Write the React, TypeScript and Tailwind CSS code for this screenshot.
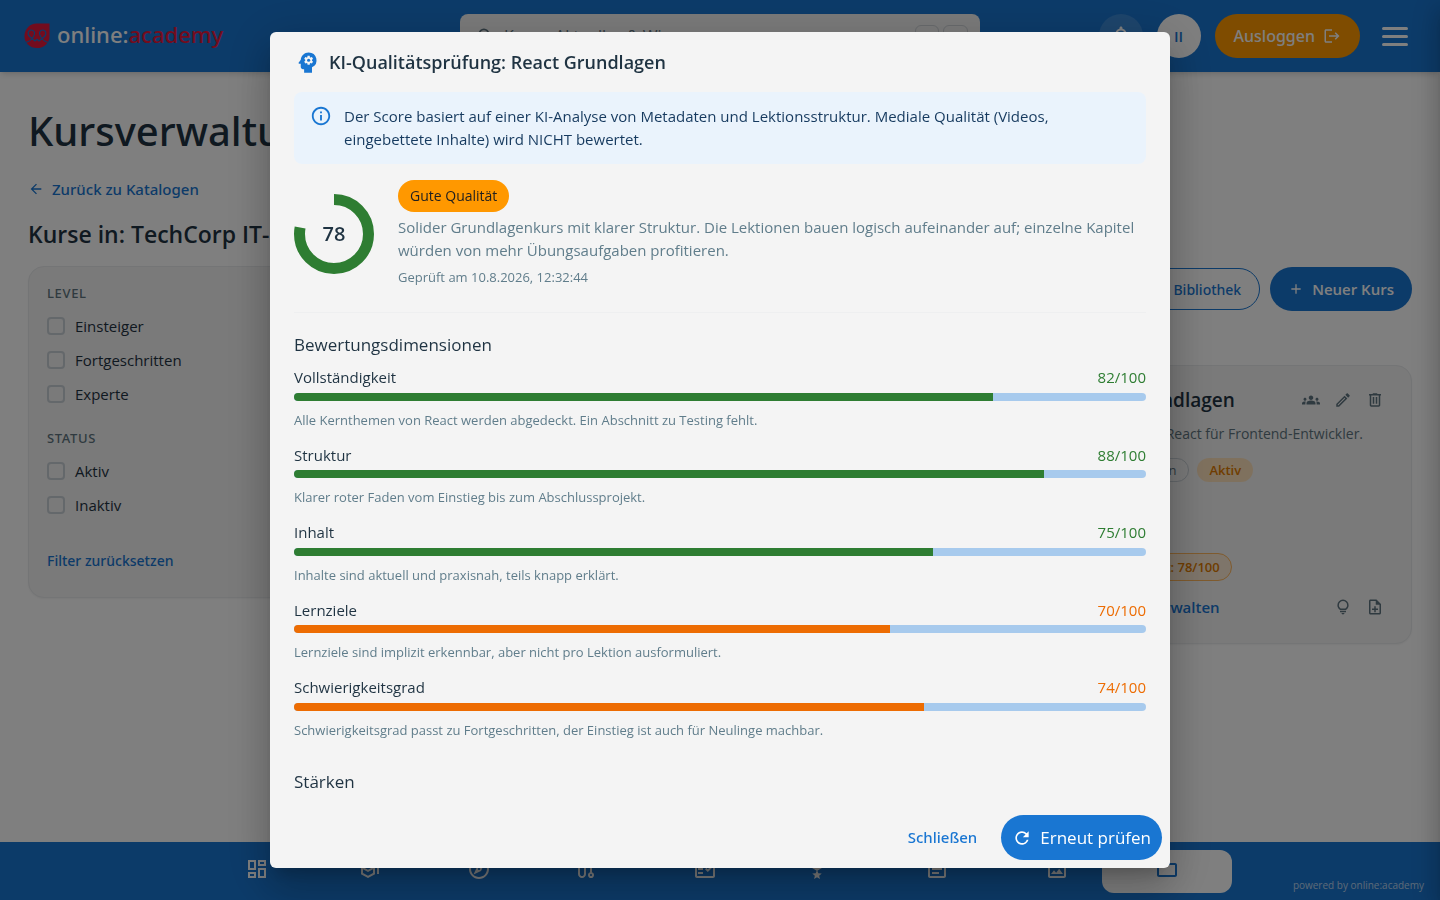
import type { ComponentType, ReactNode } from "react";
import {
  MdAdd,
  MdArrowBack,
  MdFolderOpen,
  MdGroups,
  MdInfoOutline,
  MdLogout,
  MdNotificationsNone,
  MdOutlineArticle,
  MdOutlineDashboard,
  MdOutlineEdit,
  MdOutlineExplore,
  MdOutlineFactCheck,
  MdOutlineImage,
  MdOutlineMilitaryTech,
  MdOutlineNoteAdd,
  MdOutlineSchool,
  MdPsychology,
  MdRefresh,
  MdSearch,
} from "react-icons/md";

const dimensions = [
  {
    name: "Vollständigkeit",
    score: 82,
    note: "Alle Kernthemen von React werden abgedeckt. Ein Abschnitt zu Testing fehlt.",
  },
  {
    name: "Struktur",
    score: 88,
    note: "Klarer roter Faden vom Einstieg bis zum Abschlussprojekt.",
  },
  {
    name: "Inhalt",
    score: 75,
    note: "Inhalte sind aktuell und praxisnah, teils knapp erklärt.",
  },
  {
    name: "Lernziele",
    score: 70,
    note: "Lernziele sind implizit erkennbar, aber nicht pro Lektion ausformuliert.",
  },
  {
    name: "Schwierigkeitsgrad",
    score: 74,
    note: "Schwierigkeitsgrad passt zu Fortgeschritten, der Einstieg ist auch für Neulinge machbar.",
  },
];

const filters = [
  { title: "Level", options: ["Einsteiger", "Fortgeschritten", "Experte"] },
  { title: "Status", options: ["Aktiv", "Inaktiv"] },
];

// Open Sans has no medium weight, so medium text is set in Noto Sans
const medium = "font-['Noto_Sans',sans-serif] font-medium";

type Icon = ComponentType<{ className?: string }>;

function RouteIcon({ className }: { className?: string }) {
  return (
    <svg viewBox="0 -960 960 960" fill="currentColor" fillRule="evenodd" className={className}>
      <path d="M360-120q-66 0-113-47t-47-113v-327q-35-13-57.500-43.500T120-720q0-50 35-85t85-35q50 0 85 35t35 85q0 39-22.500 69.500T280-607v327q0 33 23.500 56.500T360-200q33 0 56.500-23.500T440-280v-400q0-66 47-113t113-47q66 0 113 47t47 113v327q35 13 57.500 43.500T840-240q0 50-35 85t-85 35q-50 0-85-35t-35-85q0-39 22.500-70t57.500-43v-327q0-33-23.500-56.500T600-760q-33 0-56.500 23.500T520-680v400q0 66-47 113t-113 47ZM240-680q17 0 28.500-11.500T280-720q0-17-11.500-28.500T240-760q-17 0-28.500 11.500T200-720q0 17 11.500 28.500T240-680ZM720-200q17 0 28.500-11.500T760-240q0-17-11.500-28.500T720-280q-17 0-28.500 11.500T680-240q0 17 11.500 28.500T720-200Z" />
    </svg>
  );
}

// width is the distance to the next entry
const navItems: { label: string; icon: Icon; width: string }[] = [
  { label: "Dashboard", icon: MdOutlineDashboard, width: "w-[111px]" },
  { label: "Kurse", icon: MdOutlineSchool, width: "w-[111px]" },
  { label: "Entdecken", icon: MdOutlineExplore, width: "w-[106px]" },
  { label: "Lernpfade", icon: RouteIcon, width: "w-[120px]" },
  { label: "Prüfungen", icon: MdOutlineFactCheck, width: "w-[112px]" },
  { label: "Erfolge", icon: MdOutlineMilitaryTech, width: "w-[120px]" },
  { label: "Artikel", icon: MdOutlineArticle, width: "w-[120px]" },
  { label: "Medien", icon: MdOutlineImage, width: "w-[57px]" },
];

function Logo() {
  return (
    <svg viewBox="0 0 26 26" className="size-[26px]" aria-hidden="true">
      <path
        d="M12.500 0.500H25.500V13.500A12.500 11.500 0 0 1 13 25A12.500 11.500 0 0 1 0.500 13A12 12.500 0 0 1 12.500 0.500Z"
        fill="#e6193c"
      />
      <g fill="none" stroke="#1976d2" strokeWidth="1.200" strokeLinejoin="round">
        <path d="M1.500 19.500C5 19 8 16 9.500 13.500C11.500 10.500 10.500 7 7.500 7C4 7 3 11 5.500 13.500L11 18L13 16.300L15 18L20.500 13.500C23 11 22 7 18.500 7C15.500 7 14.500 10.500 16.500 13.500C18 16 21 19 24.500 19.500" />
      </g>
    </svg>
  );
}

function TrashIcon() {
  return (
    <svg viewBox="0 -960 960 960" fill="currentColor" className="size-[18px]">
      <path d="M280-120q-33 0-56.500-23.500T200-200v-520h-40v-80h200v-40h240v40h200v80h-40v520q0 33-23.500 56.500T680-120H280Zm400-600H280v520h400v-520ZM360-280h80v-360h-80v360Zm160 0h80v-360h-80v360Z" />
    </svg>
  );
}

function BulbIcon() {
  return (
    <svg viewBox="0 -960 960 960" fill="currentColor" className="size-[18px]">
      <path d="M480-80q-33 0-56.500-23.500T400-160h160q0 33-23.500 56.500T480-80ZM320-200v-80h320v80H320Zm10-120q-69-41-109.500-110T180-580q0-125 87.500-212.500T480-880q125 0 212.500 87.500T780-580q0 81-40.500 150T630-320H330Zm24-80h252q45-32 69.500-79T700-580q0-92-64-156t-156-64q-92 0-156 64t-64 156q0 54 24.500 101t69.500 79Z" />
    </svg>
  );
}

function IconButton({ label, children }: { label: string; children: ReactNode }) {
  return (
    <button type="button" aria-label={label} className="flex size-8 items-center justify-center">
      {children}
    </button>
  );
}

function Header() {
  return (
    <header className="relative flex h-[72px] items-center justify-between bg-[#1976d2] px-6 shadow-md">
      <a href="#" className={`flex items-center gap-[7px] text-[22px] leading-6 text-white ${medium}`}>
        <Logo />
        <span className="pb-1">
          online:<span className="text-[#e6193c]">academy</span>
        </span>
      </a>

      {/* Search */}
      <label className="absolute top-[14px] left-1/2 flex h-11 w-[520px] -translate-x-1/2 items-center gap-2 rounded-lg bg-[#f4f4f4] px-3 text-[#5f7480]">
        <MdSearch className="ml-1 size-5" />
        <input
          type="search"
          aria-label="Suche"
          placeholder="Kurse, Aktuelles & Wissen"
          className="flex-1 bg-transparent text-[16px] outline-none placeholder:text-[#5f7480]"
        />
        <span className="flex gap-1 text-[11px] leading-5">
          <kbd className="rounded-md border border-[#cfd4d8] px-2">⌘</kbd>
          <kbd className="rounded-md border border-[#cfd4d8] px-2">K</kbd>
        </span>
      </label>

      <div className="flex items-center">
        <button
          type="button"
          aria-label="Benachrichtigungen"
          className="flex size-11 items-center justify-center rounded-full bg-white/15 text-white"
        >
          <MdNotificationsNone className="size-6" />
        </button>
        <button
          type="button"
          className="ml-[14px] size-11 rounded-full bg-white text-[15px] font-semibold text-[#1976d2]"
        >
          II
        </button>
        <button
          type="button"
          className={`ml-[14px] flex h-11 items-center gap-2 rounded-full bg-[#ff9800] px-[19px] text-[16px] text-white ${medium}`}
        >
          Ausloggen
          <MdLogout className="size-[18px]" />
        </button>
        <button type="button" aria-label="Menü" className="mr-2 ml-[22px] flex w-[26px] flex-col gap-[5px]">
          <span className="h-[3px] w-full rounded-sm bg-white" />
          <span className="h-[3px] w-full rounded-sm bg-white" />
          <span className="h-[3px] w-full rounded-sm bg-white" />
        </button>
      </div>
    </header>
  );
}

function FilterPanel() {
  return (
    <aside className="w-[280px] rounded-2xl border border-[#e8eaec] bg-[#f4f4f4] px-[18px] pt-[18px] pb-6 shadow-xs">
      {filters.map((group) => (
        <fieldset key={group.title} className="mb-6">
          <legend className={`text-[13px] leading-4 tracking-wider text-[#5f7480] uppercase ${medium}`}>
            {group.title}
          </legend>
          <div className="mt-[13px] flex flex-col gap-[10px]">
            {group.options.map((option) => (
              <label key={option} className="flex items-center gap-[10px] text-[15px] leading-6 text-[#1f3342]">
                <input
                  type="checkbox"
                  className="size-[18px] appearance-none rounded-sm border-2 border-[#c9d0d6]"
                />
                {option}
              </label>
            ))}
          </div>
        </fieldset>
      ))}
      <button type="button" className={`mt-2 text-[14px] leading-6 text-[#1976d2] ${medium}`}>
        Filter zurücksetzen
      </button>
    </aside>
  );
}

function CourseCard() {
  return (
    <article className="w-[362px] rounded-2xl border border-[#e8eaec] bg-[#f4f4f4] px-5 pt-[18px] pb-5 text-[#5f7480] shadow-xs">
      <div className="flex items-center justify-between">
        <h3 className="text-[19px] leading-7 font-semibold text-[#1f3342]">React Grundlagen</h3>
        <div className="flex">
          <IconButton label="Teilnehmer">
            <MdGroups className="size-[18px]" />
          </IconButton>
          <IconButton label="Bearbeiten">
            <MdOutlineEdit className="size-[18px]" />
          </IconButton>
          <IconButton label="Löschen">
            <TrashIcon />
          </IconButton>
        </div>
      </div>
      <p className="mt-[6px] text-[14px] leading-6 whitespace-nowrap">Einführung zu React für Frontend-Entwickler.</p>
      <div className="mt-3 flex gap-2 text-[13px] leading-6 font-medium">
        <span className="rounded-full border border-[#c9d0d6] px-3 leading-[22px]">Fortgeschritten</span>
        <span className="rounded-full bg-[#ffe3bd] px-3 font-semibold text-[#e07b00]">Aktiv</span>
      </div>
      <div className="mt-[71px] flex">
        <span className="flex items-center gap-1 rounded-full border border-[#ffb65c] bg-[#fdebd5] px-[11px] text-[13px] leading-[26px] font-semibold text-[#e07b00]">
          <MdPsychology className="size-4" />
          KI-Qualität: 78/100
        </span>
      </div>
      <div className="mt-[10px] flex items-center justify-between">
        <a href="#" className="text-[15px] leading-6 font-semibold text-[#1976d2]">
          Lektionen verwalten
        </a>
        <div className="flex">
          <IconButton label="Vorschläge">
            <BulbIcon />
          </IconButton>
          <IconButton label="Inhalt hinzufügen">
            <MdOutlineNoteAdd className="size-[18px]" />
          </IconButton>
        </div>
      </div>
    </article>
  );
}

function BottomNav() {
  return (
    <nav className="fixed inset-x-0 bottom-0 flex h-[58px] justify-center bg-[#1976d2] pt-2 pl-9 text-white">
      {navItems.map(({ label, icon: ItemIcon, width }) => (
        <a key={label} href="#" aria-label={label} className={`${width} pt-[7px]`}>
          <ItemIcon className="size-6" />
        </a>
      ))}
      <a
        href="#"
        aria-label="Verwaltung"
        className="flex h-[43px] w-[130px] justify-center rounded-xl bg-white pt-[7px] text-[#1976d2]"
      >
        <MdFolderOpen className="size-6" />
      </a>
      <p className="absolute right-4 bottom-[7px] text-[10px] leading-4 text-white/70">powered by online:academy</p>
    </nav>
  );
}

function Dimension({ name, score, note }: (typeof dimensions)[number]) {
  const good = score >= 75;

  return (
    <div>
      <div className="flex justify-between text-[15px] leading-normal">
        <span>{name}</span>
        <span className={good ? "text-[#2e7d32]" : "text-[#ed6c02]"}>{score}/100</span>
      </div>
      <div className="mt-1 h-2 overflow-hidden rounded-full bg-[#a7caed]">
        <div className={`h-full ${good ? "bg-[#2e7d32]" : "bg-[#ed6c02]"}`} style={{ width: `${score}%` }} />
      </div>
      <p className="mt-[9px] text-[13px] leading-[21px] text-[#607d8b]">{note}</p>
    </div>
  );
}

function QualityDialog() {
  return (
    <div className="fixed inset-0 flex justify-center bg-black/50 py-8">
      <div
        role="dialog"
        aria-modal="true"
        aria-labelledby="dialog-title"
        className="flex w-full max-w-[900px] flex-col rounded-md bg-[#f4f4f4] text-[#1f3342] shadow-[0_11px_15px_-7px_rgba(0,0,0,0.2),0_24px_38px_3px_rgba(0,0,0,0.14),0_9px_46px_8px_rgba(0,0,0,0.12)]"
      >
        <div className="flex h-[60px] shrink-0 items-center gap-2 px-6">
          <MdPsychology className="size-[27px] text-[#1976d2]" />
          <h2 id="dialog-title" className="text-[18px] leading-8 font-semibold">
            KI-Qualitätsprüfung: React Grundlagen
          </h2>
        </div>

        <div className="min-h-0 flex-1 overflow-hidden px-6">
          {/* Notice */}
          <div className="flex gap-3 rounded-lg bg-[#eaf3fc] px-4 py-[13px] text-[15px] leading-[23px] text-[#163a5f]">
            <MdInfoOutline className="size-[22px] shrink-0 text-[#1976d2]" />
            <p>
              Der Score basiert auf einer KI-Analyse von Metadaten und Lektionsstruktur. Mediale Qualität (Videos,
              eingebettete Inhalte) wird NICHT bewertet.
            </p>
          </div>

          {/* Overall score */}
          <div className="mt-4 flex items-center gap-6 border-b border-[#eeeff0] pb-6">
            <div className="relative flex size-20 shrink-0 items-center justify-center">
              <svg viewBox="0 0 80 80" className="absolute inset-0 -rotate-90" aria-hidden="true">
                <circle
                  cx="40"
                  cy="40"
                  r="34.5"
                  fill="none"
                  stroke="#2e7d32"
                  strokeWidth="11"
                  pathLength="100"
                  strokeDasharray="78 100"
                />
              </svg>
              <span className="text-xl font-semibold">78</span>
            </div>
            <div>
              <span className="inline-block rounded-full bg-[#ff9800] px-3 align-top text-[14px] leading-8 text-[#1f1f1f]">
                Gute Qualität
              </span>
              <p className="mt-1 text-[15px] leading-[23px] text-[#607d8b]">
                Solider Grundlagenkurs mit klarer Struktur. Die Lektionen bauen logisch aufeinander auf; einzelne
                Kapitel würden von mehr Übungsaufgaben profitieren.
              </p>
              <p className="mt-1 text-[13px] leading-[22px] text-[#607d8b]">Geprüft am 10.8.2026, 12:32:44</p>
            </div>
          </div>

          <h3 className="mt-5 text-[17px] leading-6">Bewertungsdimensionen</h3>
          <div className="mt-[9px] flex flex-col gap-[13px]">
            {dimensions.map((dimension) => (
              <Dimension key={dimension.name} {...dimension} />
            ))}
          </div>

          <h3 className="mt-[29px] text-[17px] leading-6">Stärken</h3>
        </div>

        <div className="flex shrink-0 items-center justify-end gap-3 p-2">
          <button type="button" className={`px-3 text-[15px] text-[#1976d2] ${medium}`}>
            Schließen
          </button>
          <button
            type="button"
            className="flex h-[45px] items-center gap-2 rounded-full bg-[#1976d2] px-[11px] text-[17px] text-white"
          >
            <MdRefresh className="size-5" />
            Erneut prüfen
          </button>
        </div>
      </div>
    </div>
  );
}

export default function App() {
  return (
    <div className="min-h-screen bg-white font-['Open_Sans','Noto_Sans',sans-serif] text-[#1f3342]">
      <Header />

      <main className="px-7 pt-[31px] pb-20">
        <h1 className={`text-[40px] leading-14 ${medium}`}>Kursverwaltung</h1>
        <a href="#" className={`mt-[18px] flex items-center gap-2 text-[15px] leading-6 text-[#1976d2] ${medium}`}>
          <MdArrowBack className="size-4" />
          Zurück zu Katalogen
        </a>
        <h2 className="mt-[15px] text-[23px] leading-9 font-semibold">Kurse in: TechCorp IT-Hub</h2>

        <div className="mt-[14px] flex items-start gap-6">
          <FilterPanel />
          <section className="flex flex-1 flex-col items-end pt-px">
            <div className="flex items-center gap-[10px]">
              <button
                type="button"
                className={`h-[42px] rounded-full border border-[#1976d2] px-[18px] text-[14px] text-[#1976d2] ${medium}`}
              >
                Aus Bibliothek
              </button>
              <button
                type="button"
                className="flex h-11 items-center gap-2 rounded-full bg-[#1976d2] px-[18px] text-[15px] font-semibold text-white"
              >
                <MdAdd className="size-4" />
                Neuer Kurs
              </button>
            </div>
            <div className="mt-[54px]">
              <CourseCard />
            </div>
          </section>
        </div>
      </main>

      <BottomNav />
      <QualityDialog />

      {/* Closed drawer, parked beyond the right edge */}
      <div className="fixed inset-y-0 left-full w-80 shadow-[0_8px_10px_-5px_rgba(0,0,0,0.2),0_16px_24px_2px_rgba(0,0,0,0.14),0_6px_30px_5px_rgba(0,0,0,0.12)]" />
    </div>
  );
}
